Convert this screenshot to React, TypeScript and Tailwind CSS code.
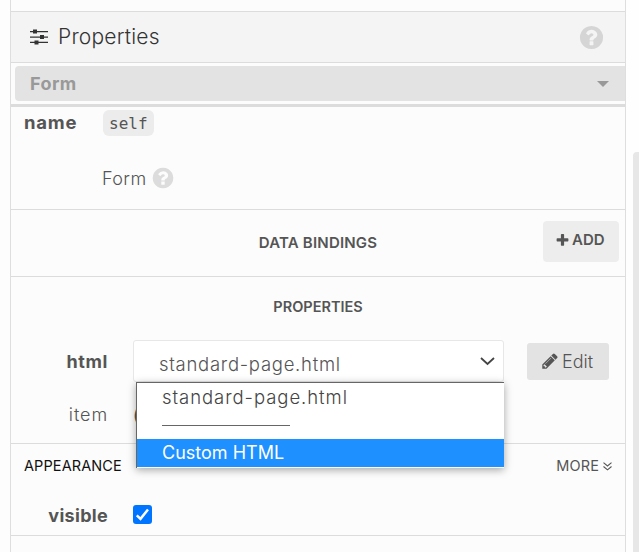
import React from "react";

function FaIcon({ d, className }: { d: string; className: string }) {
  return (
    <svg viewBox="0 0 1792 1792" fill="currentColor" className={`shrink-0 ${className}`}>
      <path d={d} />
    </svg>
  );
}

const QUESTION =
  "M1024 1376v-192q0-14-9-23t-23-9h-192q-14 0-23 9t-9 23v192q0 14 9 23t23 9h192q14 0 23-9t9-23zm256-672q0-88-55.5-163t-138.5-116-170-41q-243 0-371 213-15 24 8 42l132 100q7 6 19 6 16 0 25-12 53-68 86-92 34-24 86-24 48 0 85.5 26t37.5 59q0 38-20 61t-68 45q-63 28-115.5 86.5t-52.5 125.5v36q0 14 9 23t23 9h192q14 0 23-9t9-23q0-19 21.5-49.5t54.5-49.5q32-18 49-28.5t46-35 44.5-48 28-60.5 12.5-81zm384 192q0 209-103 385.5t-279.5 279.5-385.5 103-385.5-103-279.5-279.5-103-385.5 103-385.5 279.5-279.5 385.5-103 385.5 103 279.5 279.5 103 385.5z";
const PENCIL =
  "M491 1536l91-91-235-235-91 91v107h128v128h107zm523-928q0-22-22-22-10 0-17 7l-542 542q-7 7-7 17 0 22 22 22 10 0 17-7l542-542q7-7 7-17zm-54-192l416 416-832 832h-416v-416zm683 96q0 53-37 90l-166 166-416-416 166-165q36-38 90-38 53 0 91 38l235 234q37 39 37 91z";
const PLUS =
  "M1600 736v192q0 40-28 68t-68 28h-416v416q0 40-28 68t-68 28h-192q-40 0-68-28t-28-68v-416h-416q-40 0-68-28t-28-68v-192q0-40 28-68t68-28h416v-416q0-40 28-68t68-28h192q40 0 68 28t28 68v416h416q40 0 68 28t28 68z";

function Sliders() {
  return (
    <svg width="18" height="16" viewBox="0 0 18 16" className="shrink-0" fill="#333">
      <path d="M0 2h18v1.3H0zM0 7.4h18v1.3H0zM0 12.8h18v1.3H0z" />
      <path d="M3 .6h4v4H3zM10 6h4v4h-4zM4.5 11.4h4v4h-4z" />
    </svg>
  );
}

export default function App() {
  return (
    <div className="flex h-[552px] w-[639px] overflow-hidden bg-[#fefdfe] font-['Inter',sans-serif] text-[#555]">
      <div className="ml-[10px] flex w-[616px] flex-col border-x border-[#dedede] bg-[#fcfcfc]">
        <div className="h-[11px] shrink-0" />
        <header className="flex h-[52px] shrink-0 items-center border-y border-[#dcdcdc] bg-[#f4f4f4] pl-[19px] pr-[20px]">
          <Sliders />
          <h1 className="ml-[10px] flex-1 text-[21px] leading-[30px] font-light tracking-[0.2px] text-[#333]">Properties</h1>
          <FaIcon d={QUESTION} className="size-[27px] text-[#d5d5d5]" />
        </header>
        <div className="h-[44px] shrink-0 border-b-[3px] border-[#dcdcdc] py-[3px] pl-[4px]">
          <div className="flex h-[35px] items-center justify-between rounded-l bg-[#e3e3e3] pl-[15px] pr-[16px] text-[#999]">
            <span className="text-[18px] font-bold tracking-[0.4px]">Form</span>
            <svg width="12" height="6" viewBox="0 0 12 6" fill="currentColor"><path d="M0 0h12L6 6z" /></svg>
          </div>
        </div>

        <section className="h-[103px] shrink-0 border-b border-[#dcdcdc] pl-[13px] pt-[3px]">
          <div className="flex h-[26px] items-center">
            <span className="w-[79px] text-[18.5px] font-bold tracking-[0.8px]">name</span>
            <code className="flex h-[26px] w-[51px] items-center rounded-md bg-[#ececec] px-[6px] pt-[2px] font-['DejaVu_Sans_Mono',monospace] text-[16px]">self</code>
          </div>
          <div className="mt-[29px] flex h-[26px] items-center pl-[78px]">
            <span className="w-[47px] text-[18px] font-light tracking-[0.4px]">Form</span>
            <FaIcon d={QUESTION} className="ml-[2px] size-[24px] text-[#dcdcdc]" />
          </div>
        </section>

        <section className="grid h-[67px] shrink-0 grid-cols-[1fr_auto_1fr] items-center border-b border-[#dcdcdc] pr-[6px]">
          <span />
          <h2 className="pl-[6px] text-[15px] font-semibold tracking-[0.2px]">DATA BINDINGS</h2>
          <button className="mb-[4px] flex h-[41px] w-[76px] items-center justify-self-end rounded bg-[#ededed] pb-px pl-[12px] text-[15px] font-semibold">
            <FaIcon d={PLUS} className="mr-[2px] size-[15px]" />ADD
          </button>
        </section>

        <section className="h-[167px] shrink-0 border-b border-[#dcdcdc]">
          <h2 className="flex h-[63px] items-center justify-center pb-[3px] text-[14.5px] font-semibold">PROPERTIES</h2>
          <div className="relative flex h-[42px]">
            <span className="w-[97px] pt-[9px] text-right text-[18px] leading-[26px] font-bold tracking-[0.6px]">html</span>
            <div className="ml-[25px] flex h-[42px] w-[371px] justify-between rounded-[3px] border border-[#e7e7e7] bg-white pl-[25px] pr-[8px]">
              <span className="mt-[10px] h-[26px] text-[18.5px] leading-[26px] font-light tracking-[0.72px]">standard-page.html</span>
              <svg width="15" height="9" viewBox="0 0 15 9" fill="none" stroke="#444" strokeWidth="1.8" className="mt-[16px]"><path d="M1 1l6.5 6L14 1" /></svg>
            </div>
            <button className="ml-[23px] mt-[3px] flex h-[37px] w-[82px] items-center rounded-[3px] bg-[#e3e3e3] pl-[14px] text-[18px] font-light">
              <FaIcon d={PENCIL} className="mb-[2px] mr-[3px] size-[18px]" />Edit
            </button>
            <div className="absolute left-[125px] top-[42px] z-10 h-[86px] w-[368px] border-l border-t border-[#666] bg-white shadow-[0_2px_8px_rgba(0,0,0,0.35)]">
              <div className="h-[28px] pl-[25px] text-[18.5px] leading-[28px] font-light tracking-[0.95px] text-[#444]">standard-page.html</div>
              <div className="h-[28px] pl-[25px] pt-[14px]"><div className="h-px w-[128px] bg-[#666]" /></div>
              <div className="h-[28px] bg-[#1e90ff] pl-[25px] text-[18px] leading-[28px] text-white">Custom HTML</div>
            </div>
          </div>
          <div className="flex h-[61px] pt-[20px]">
            <span className="w-[97px] text-right text-[18px] leading-[26px] font-light tracking-[0.9px]">item</span>
            <div className="ml-[25px] pt-[3px] text-[17px] leading-[20px] font-medium">(</div>
          </div>
        </section>

        <section className="h-[92px] shrink-0 border-b border-[#dcdcdc]">
          <div className="flex h-[44px] items-center justify-between pl-[13px] pr-[13px] text-[14.5px]">
            <h2 className="tracking-[0.1px] text-[#111]">APPEARANCE</h2>
            <div className="flex items-center tracking-[0.1px]">MORE
              <svg width="9" height="9" viewBox="0 0 9 9" fill="none" stroke="currentColor" strokeWidth="1.1" className="ml-[4px]"><path d="M.5.7l4 3.3 4-3.3M.5 4.5l4 3.3 4-3.3" /></svg>
            </div>
          </div>
          <div className="flex">
            <span className="mt-[15px] w-[97px] text-right text-[18px] leading-[26px] font-bold tracking-[0.3px]">visible</span>
            <div className="ml-[25px] mt-[17px] flex size-[19px] items-center justify-center rounded-[3px] bg-[#0075ff]">
              <svg width="15" height="15" viewBox="0 0 15 15" fill="none" stroke="white" strokeWidth="2.5"><path d="M1.8 8.3l3.7 3.5L13 2.5" /></svg>
            </div>
          </div>
        </section>
      </div>
      <div className="flex-1 bg-[#fefefe] pl-[7px] pt-[152px]">
        <div className="h-[400px] rounded-tl bg-[#e7e7e7]" />
      </div>
    </div>
  );
}
